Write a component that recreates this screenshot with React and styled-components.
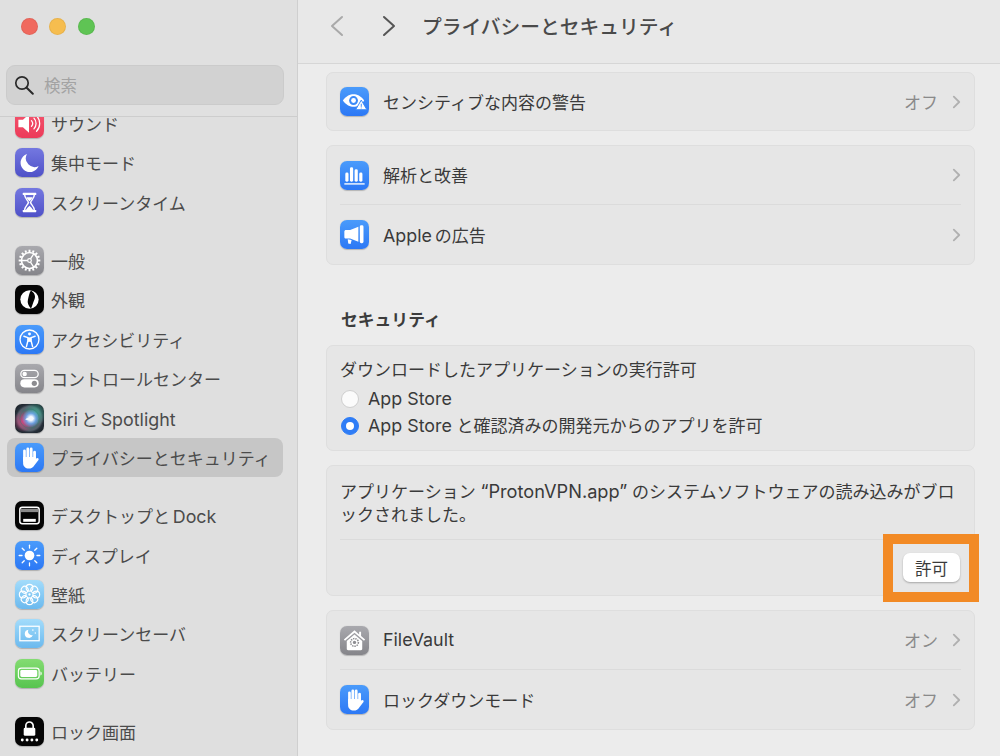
import React from 'react'
import styled, { createGlobalStyle } from 'styled-components'

const GlobalStyle = createGlobalStyle`
  html, body {
    margin: 0;
    padding: 0;
    background: #ececec;
    font-family: Inter, "Noto Sans CJK JP", sans-serif;
    -webkit-font-smoothing: antialiased;
  }
`

const tones = {
  blue: 'linear-gradient(180deg, #4a9bfb, #2c78f5)',
  gray: 'linear-gradient(180deg, #a9a9ae, #85858a)',
  black: '#050505',
  indigo: 'linear-gradient(180deg, #7478e0, #4f51c8)',
  red: 'linear-gradient(180deg, #f4566f, #ec3b59)',
  sky: 'linear-gradient(180deg, #a3dcfb, #6bb9ee)',
  green: 'linear-gradient(180deg, #84dc72, #57c44f)',
  siri: `radial-gradient(circle at 55% 50%, #f4f8ff 0 9%, rgba(110, 165, 235, 0.9) 24%, transparent 42%),
    radial-gradient(circle at 30% 60%, #d5447f 0, transparent 40%),
    radial-gradient(circle at 70% 32%, #3fa58f 0, transparent 42%),
    radial-gradient(circle at 50% 50%, #56616c 0 58%, #27303a 68%, #141a1e 100%)`,
}

const Window = styled.div`
  display: flex;
  width: 1000px;
  height: 756px;
  overflow: hidden;
  background: #ececec;
`

const Sidebar = styled.aside`
  display: flex;
  flex-direction: column;
  flex: none;
  width: 297px;
  height: 100%;
  background: #dfdfdf;
  border-right: 1px solid #cfcfcf;
`

const SidebarTop = styled.div`
  flex: none;
  height: 117px;
  padding: 18px 13px 0 6px;
  box-sizing: border-box;
  border-bottom: 1px solid #cdcdcd;
  background: #e0e0e0;
`

const Lights = styled.div`
  display: flex;
  gap: 11.4px;
  padding-left: 15px;
  margin-bottom: 30px;
`

const Light = styled.span`
  width: 17px;
  height: 17px;
  border-radius: 50%;
  background: ${(p) => p.$color};
  box-shadow: inset 0 0 0 1px rgba(0, 0, 0, 0.06);
`

const Search = styled.div`
  display: flex;
  align-items: center;
  gap: 10px;
  height: 40px;
  padding-left: 7px;
  box-sizing: border-box;
  border-radius: 9px;
  background: #d2d2d2;
  border: 1px solid #cbcbcb;
  color: #a3a3a3;
  font-size: 16.5px;
`

const ListClip = styled.div`
  flex: 1;
  min-height: 0;
  overflow: hidden;
`

const List = styled.div`
  display: flex;
  flex-direction: column;
  margin-top: -13.4px;
  padding: 0 14px 0 7px;
`

const Group = styled.div`
  display: flex;
  flex-direction: column;
  margin-bottom: 18.7px;
`

const SideRow = styled.div`
  display: flex;
  align-items: center;
  gap: 7px;
  height: 39.45px;
  padding-left: 8px;
  border-radius: 8px;
  font-size: 17px;
  color: #4b4b4b;
  white-space: nowrap;
  background: ${(p) => (p.$active ? '#c6c6c6' : 'transparent')};
`

const Tile = styled.span`
  display: flex;
  align-items: center;
  justify-content: center;
  flex: none;
  width: 29px;
  height: 29px;
  border-radius: 7px;
  background: ${(p) => tones[p.$tone]};
  box-shadow: 0 0.5px 1px rgba(0, 0, 0, 0.22);
  svg {
    display: block;
    width: 100%;
    height: 100%;
  }
`

const Latin = styled.span`
  font-size: ${(p) => p.$scale || 1.05}em;
`

const Mixed = styled.span`
  word-spacing: -2px;
`

const Main = styled.main`
  display: flex;
  flex-direction: column;
  flex: 1;
  min-width: 0;
`

const Header = styled.header`
  display: flex;
  align-items: center;
  flex: none;
  height: 64px;
  padding-left: 32px;
  padding-bottom: 11px;
  box-sizing: border-box;
  background: #e8e8e8;
  border-bottom: 1px solid #d6d6d6;
`

const NavButton = styled.span`
  display: flex;
  width: 14px;
  margin-right: 38px;
  &:last-of-type {
    margin-right: 26px;
  }
`

const Title = styled.h1`
  margin: 0 0 1px;
  font-size: 19.75px;
  font-weight: 500;
  color: #4a4a4a;
  white-space: nowrap;
`

const Content = styled.div`
  display: flex;
  flex-direction: column;
  gap: 14px;
  padding: 8px 25px 0 28px;
`

const Card = styled.section`
  border: 1px solid #dedede;
  border-radius: 7px;
  background: #e6e6e6;
  padding: 0 13px;
`

const RowItem = styled.div`
  display: flex;
  align-items: center;
  box-sizing: border-box;
  height: ${(p) => p.$h}px;
  & + & {
    border-top: 1px solid #dbdbdb;
  }
`

const RowLabel = styled.span`
  flex: 1;
  margin: 0 0 1px 14px;
  font-size: 17px;
  color: #3a3a3a;
  white-space: nowrap;
`

const RowValue = styled.span`
  font-size: 17px;
  color: #8a8a8a;
  margin: 0 14px 1px 0;
`

const SectionTitle = styled.h2`
  margin: 30px 0 0 15px;
  height: 22px;
  line-height: 22px;
  font-size: 16.8px;
  font-weight: 600;
  color: #3c3c3c;
`

const PermitCard = styled(Card)`
  padding: 12px 14px 11px 13px;
  font-size: 17px;
  color: #3a3a3a;
`

const PermitTitle = styled.div`
  height: 24px;
  line-height: 24px;
  margin-bottom: 3px;
`

const RadioRow = styled.div`
  display: flex;
  align-items: center;
  gap: 9px;
  height: 27px;
  line-height: 27px;
  padding-left: 1px;
  white-space: nowrap;
`

const RadioText = styled.span`
  display: block;
`

const Radio = styled.span`
  position: relative;
  flex: none;
  width: 18px;
  height: 18px;
  box-sizing: border-box;
  border-radius: 50%;
  background: ${(p) => (p.$on ? '#2f7df6' : '#fbfbfb')};
  border: 1px solid ${(p) => (p.$on ? '#2f7df6' : '#cfcfcf')};
  &::after {
    content: '';
    display: ${(p) => (p.$on ? 'block' : 'none')};
    position: absolute;
    inset: 4px;
    border-radius: 50%;
    background: #fff;
  }
`

const BlockedCard = styled(Card)`
  padding: 14px 14px 0 13px;
  font-size: 17px;
  color: #3a3a3a;
`

const BlockedText = styled.p`
  margin: 0;
  line-height: 23px;
  padding-bottom: 12px;
  border-bottom: 1px solid #dbdbdb;
  white-space: nowrap;
`

const BlockedFoot = styled.div`
  display: flex;
  justify-content: flex-end;
  height: 55px;
  padding-top: 13px;
  box-sizing: border-box;
`

const Highlight = styled.div`
  position: relative;
  width: 57px;
  height: 29px;
`

const AllowButton = styled.button`
  width: 100%;
  height: 100%;
  padding: 0;
  border: 0;
  border-radius: 7px;
  background: #fff;
  box-shadow: 0 1px 2px rgba(0, 0, 0, 0.28);
  font: inherit;
  font-size: 16.5px;
  color: #3a3a3a;
`

const HighlightFrame = styled.span`
  position: absolute;
  left: -20px;
  top: -19px;
  width: 96px;
  height: 68px;
  box-sizing: border-box;
  border: 10px solid #f28a25;
  pointer-events: none;
`

const W = '#fff'

const SearchGlyph = () => (
  <svg width="20" height="20" viewBox="0 0 20 20" fill="none" stroke="#2a2a2a" strokeWidth="1.7" strokeLinecap="round">
    <circle cx="8" cy="8" r="6.200" />
    <path d="M12.700 12.700 18.800 18.800" strokeWidth="2" />
  </svg>
)

const Chevron = () => (
  <svg width="9" height="14" viewBox="0 0 10 15" fill="none" stroke="#b0b0b0" strokeWidth="2" strokeLinecap="round" strokeLinejoin="round">
    <path d="M2 1.500 8 7.500 2 13.500" />
  </svg>
)

const NavChevron = ({ dir, color }) => (
  <svg width="14" height="22" viewBox="0 0 14 22" fill="none" stroke={color} strokeWidth="2" strokeLinecap="round" strokeLinejoin="round">
    <path d={dir === 'right' ? 'M2 2 12 11 2 20' : 'M12 2 2 11 12 20'} />
  </svg>
)

const Drawing = ({ children }) => <svg viewBox="0 0 30 30">{children}</svg>

const SoundIcon = () => (
  <Drawing>
    <path d="M3.500 11h4.700L14.500 5.500v19l-6.300-5.500H3.500z" fill={W} />
    <g fill="none" stroke={W} strokeWidth="1.300" strokeLinecap="round">
      <path d="M17 12a4.500 4.500 0 0 1 0 6" />
      <path d="M19.600 9.500a8 8 0 0 1 0 11" />
      <path d="M22.300 7a11.500 11.500 0 0 1 0 16" />
    </g>
  </Drawing>
)

const MoonIcon = () => (
  <Drawing>
    <path d="M12.400 6.200a9.600 9.600 0 1 0 12 12.400 9 9 0 0 1-12-12.400z" fill={W} />
  </Drawing>
)

const HourglassIcon = () => (
  <Drawing>
    <g fill={W}>
      <rect x="8" y="5" width="14" height="2.300" rx="0.600" />
      <rect x="8" y="22.700" width="14" height="2.300" rx="0.600" />
    </g>
    <path d="M10 7c0 4 3.400 5.600 3.900 8-.5 2.400-3.900 4-3.900 8M20 7c0 4-3.400 5.600-3.900 8 .5 2.400 3.900 4 3.900 8" fill="none" stroke={W} strokeWidth="1.500" />
    <path d="M11.800 9.500h6.400c-.6 1.800-2.200 3-3.200 4.300-1-1.300-2.600-2.500-3.200-4.300zM11.300 22.800c.5-1.700 2.500-3.200 3.700-4.500 1.200 1.300 3.200 2.800 3.700 4.500z" fill={W} />
  </Drawing>
)

const GearIcon = () => {
  const teeth = Array.from({ length: 16 }, (_, i) => i * 22.5)
  return (
    <Drawing>
      <g stroke={W} fill="none">
        <circle cx="15" cy="15" r="8.300" strokeWidth="1.700" />
        {teeth.map((a) => (
          <path key={a} d="M15 3.800v2.400" strokeWidth="2" transform={`rotate(${a} 15 15)`} />
        ))}
        <circle cx="15" cy="15" r="1.900" strokeWidth="1.300" />
        <path d="M13.100 15H7M16 13.400l3.900-6.100M16 16.600l3.900 6.100" strokeWidth="1.300" />
      </g>
    </Drawing>
  )
}

const AppearanceIcon = () => (
  <Drawing>
    <circle cx="15" cy="15" r="9.500" fill={W} />
    <path d="M16.500 5.600c3.800 2.500 5.100 6 3.600 9.400s-2.400 7-3.600 9.400c-2.500-2.500-4.100-6-3.100-9.400s1.100-7 3.100-9.400z" fill="#050505" />
  </Drawing>
)

const AccessIcon = () => (
  <Drawing>
    <circle cx="15" cy="15" r="9.800" fill="none" stroke={W} strokeWidth="1.400" />
    <circle cx="15" cy="9.300" r="1.500" fill={W} />
    <path d="M9.200 11.600 13.300 13v3.500l-1.500 5.800M20.800 11.600 16.700 13v3.500l1.500 5.800" fill="none" stroke={W} strokeWidth="1.500" strokeLinecap="round" strokeLinejoin="round" />
    <rect x="13.400" y="12.800" width="3.200" height="4.600" fill={W} />
  </Drawing>
)

const ControlIcon = () => (
  <Drawing>
    <rect x="6" y="6.500" width="18" height="7.500" rx="3.750" fill="none" stroke={W} strokeWidth="1.300" />
    <circle cx="10" cy="10.250" r="2.300" fill={W} />
    <rect x="5.500" y="15.700" width="19" height="8.500" rx="4.250" fill={W} />
    <circle cx="20" cy="19.950" r="2.700" fill="#8c8c90" />
  </Drawing>
)

const SiriIcon = () => (
  <Drawing>
    <circle cx="15" cy="15" r="10" fill="none" stroke="#2f7f74" strokeWidth="0.800" opacity="0.6" />
    <path d="M10.500 15.800c2.500-1.800 5-2.500 9.500-1.300-3 2.400-6.500 3-9.500 1.300z" fill="#f3f8ff" />
  </Drawing>
)

const HandIcon = () => (
  <Drawing>
    <g fill={W} transform="matrix(-1 0 0 1 30 0)">
      <rect x="8.300" y="8" width="2.900" height="12" rx="1.450" />
      <rect x="11.800" y="4.700" width="2.900" height="14" rx="1.450" />
      <rect x="15.300" y="4.700" width="2.900" height="14" rx="1.450" />
      <rect x="18.800" y="6.700" width="2.800" height="13" rx="1.400" />
      <path d="M8.300 14.500h13.300v6.800c0 3-2.600 5.200-5.700 5.200-2.800 0-4.600-1.200-6-3.600L5.700 17.500c-.8-1.500 1.200-2.800 2.400-1.400l2 2.300z" />
    </g>
  </Drawing>
)

const DesktopIcon = () => (
  <Drawing>
    <rect x="5" y="6.500" width="20" height="17" rx="2.500" fill="none" stroke={W} strokeWidth="1.500" />
    <rect x="6" y="8" width="18" height="3.500" fill="#8a8a8a" />
    <rect x="8.500" y="18.500" width="13" height="3" fill={W} />
  </Drawing>
)

const SunIcon = () => {
  const rays = Array.from({ length: 8 }, (_, i) => i * 45)
  return (
    <Drawing>
      <circle cx="15" cy="15" r="5" fill={W} />
      {rays.map((a) => (
        <path key={a} d="M15 4.300v3" stroke={W} strokeWidth="1.300" strokeLinecap="round" transform={`rotate(${a} 15 15)`} />
      ))}
    </Drawing>
  )
}

const FlowerIcon = () => {
  const petals = Array.from({ length: 8 }, (_, i) => i * 45)
  return (
    <Drawing>
      <g fill="none" stroke={W} strokeWidth="1.200">
        {petals.map((a) => (
          <circle key={a} cx="15" cy="8" r="3.500" transform={`rotate(${a} 15 15)`} />
        ))}
      </g>
      <circle cx="15" cy="15" r="1.200" fill={W} />
    </Drawing>
  )
}

const SaverIcon = () => (
  <Drawing>
    <rect x="5" y="7.500" width="20" height="15" fill="none" stroke={W} strokeWidth="1.300" />
    <path d="M13.800 11a4.300 4.300 0 1 0 4.700 5.600 4 4 0 0 1-4.700-5.600z" fill={W} />
    <circle cx="18.500" cy="11.500" r="0.800" fill={W} />
    <circle cx="21" cy="14.500" r="0.700" fill={W} />
  </Drawing>
)

const BatteryIcon = () => (
  <Drawing>
    <rect x="3.500" y="9.500" width="21.500" height="11" rx="3" fill="none" stroke={W} strokeWidth="1.200" />
    <rect x="5.500" y="11.500" width="17.500" height="7" rx="1.500" fill={W} />
    <path d="M26.300 13v4c.9-.3 1.300-1 1.300-2s-.4-1.700-1.300-2z" fill={W} />
  </Drawing>
)

const LockIcon = () => (
  <Drawing>
    <path d="M11.200 11.500V9a3.800 3.800 0 0 1 7.600 0v2.500" fill="none" stroke={W} strokeWidth="1.700" />
    <rect x="9" y="11" width="12" height="8.500" rx="1.500" fill={W} />
    {[7.500, 12.500, 17.500, 22.500].map((x) => (
      <circle key={x} cx={x} cy="23.800" r="1.500" fill={W} />
    ))}
  </Drawing>
)

const EyeAlertIcon = () => (
  <Drawing>
    <path d="M3 14c3.500-5 7.500-6.500 11-6.500s7.500 1.500 11 6.500c-3.500 5-7.500 6.500-11 6.500S6.500 19 3 14z" fill={W} />
    <circle cx="14" cy="14" r="4.600" fill="#3a8af8" />
    <circle cx="14" cy="14" r="2.500" fill={W} />
    <path d="M22 13.500 27.800 23.500H16.200z" fill={W} stroke="#3a8af8" strokeWidth="1" strokeLinejoin="round" />
    <path d="M22 17.300v3.200M22 21.300v.8" stroke="#3a8af8" strokeWidth="1" />
  </Drawing>
)

const BarsIcon = () => (
  <Drawing>
    <g fill={W}>
      <rect x="5.500" y="12" width="3.300" height="9.500" rx="1.500" />
      <rect x="10.300" y="6.500" width="3.300" height="15" rx="1.500" />
      <rect x="15.100" y="8.500" width="3.300" height="13" rx="1.500" />
      <rect x="19.900" y="12" width="3.300" height="9.500" rx="1.500" />
      <rect x="4.500" y="23" width="21" height="1.400" />
    </g>
  </Drawing>
)

const MegaphoneIcon = () => (
  <Drawing>
    <path d="M4.500 12c0-1 .7-1.700 1.700-1.700h4.300L19 7v15.500l-8.500-3.300H6.200c-1 0-1.700-.7-1.700-1.700z" fill={W} />
    <rect x="20.500" y="5.500" width="3.800" height="18.500" rx="1.500" fill={W} />
    <path d="M8 20l4 .8-1 4-2.500-.5z" fill={W} />
  </Drawing>
)

const VaultIcon = () => (
  <Drawing>
    <path d="M15 4.500 4 14l1.200 1.300L15 7l9.800 8.300L26 14l-4.200-3.600V6h-2v2.700z" fill={W} />
    <path d="M7 15.500 15 8.800l8 6.700v8c0 1-.5 1.500-1.500 1.500h-13C7.500 25 7 24.500 7 23.500z" fill={W} />
    <circle cx="15" cy="17" r="4" fill="none" stroke="#8d8d91" strokeWidth="1.600" strokeDasharray="1.500 0.900" />
    <circle cx="15" cy="17" r="1.700" fill="#8d8d91" />
  </Drawing>
)

const sideGroups = [
  [
    { label: 'サウンド', tone: 'red', icon: <SoundIcon /> },
    { label: '集中モード', tone: 'indigo', icon: <MoonIcon /> },
    { label: 'スクリーンタイム', tone: 'indigo', icon: <HourglassIcon /> },
  ],
  [
    { label: '一般', tone: 'gray', icon: <GearIcon /> },
    { label: '外観', tone: 'black', icon: <AppearanceIcon /> },
    { label: 'アクセシビリティ', tone: 'blue', icon: <AccessIcon /> },
    { label: 'コントロールセンター', tone: 'gray', icon: <ControlIcon /> },
    { label: <Mixed><Latin>Siri</Latin> と <Latin>Spotlight</Latin></Mixed>, tone: 'siri', icon: <SiriIcon /> },
    { label: 'プライバシーとセキュリティ', tone: 'blue', icon: <HandIcon />, active: true },
  ],
  [
    { label: <Mixed>デスクトップと <Latin>Dock</Latin></Mixed>, tone: 'black', icon: <DesktopIcon /> },
    { label: 'ディスプレイ', tone: 'blue', icon: <SunIcon /> },
    { label: '壁紙', tone: 'sky', icon: <FlowerIcon /> },
    { label: 'スクリーンセーバ', tone: 'sky', icon: <SaverIcon /> },
    { label: 'バッテリー', tone: 'green', icon: <BatteryIcon /> },
  ],
  [{ label: 'ロック画面', tone: 'black', icon: <LockIcon /> }],
]

const SettingRow = ({ tone = 'blue', icon, label, value, h }) => (
  <RowItem $h={h}>
    <Tile $tone={tone}>{icon}</Tile>
    <RowLabel>{label}</RowLabel>
    {value && <RowValue>{value}</RowValue>}
    <Chevron />
  </RowItem>
)

const App = () => {
  return (
    <Window>
      <GlobalStyle />
      <Sidebar>
        <SidebarTop>
          <Lights>
            <Light $color="#f0695e" />
            <Light $color="#f6bd4f" />
            <Light $color="#5fc454" />
          </Lights>
          <Search>
            <SearchGlyph />
            検索
          </Search>
        </SidebarTop>
        <ListClip>
          <List>
            {sideGroups.map((group, i) => (
              <Group key={i}>
                {group.map((item, j) => (
                  <SideRow key={j} $active={item.active}>
                    <Tile $tone={item.tone}>{item.icon}</Tile>
                    <span>{item.label}</span>
                  </SideRow>
                ))}
              </Group>
            ))}
          </List>
        </ListClip>
      </Sidebar>
      <Main>
        <Header>
          <NavButton>
            <NavChevron dir="left" color="#a9a9a9" />
          </NavButton>
          <NavButton>
            <NavChevron dir="right" color="#555" />
          </NavButton>
          <Title>プライバシーとセキュリティ</Title>
        </Header>
        <Content>
          <Card>
            <SettingRow icon={<EyeAlertIcon />} label="センシティブな内容の警告" value="オフ" h={57} />
          </Card>
          <Card>
            <SettingRow icon={<BarsIcon />} label="解析と改善" h={58} />
            <SettingRow icon={<MegaphoneIcon />} label={<Mixed><Latin>Apple</Latin> の広告</Mixed>} h={60} />
          </Card>
          <SectionTitle>セキュリティ</SectionTitle>
          <PermitCard>
            <PermitTitle>ダウンロードしたアプリケーションの実行許可</PermitTitle>
            <RadioRow>
              <Radio />
              <RadioText><Latin>App Store</Latin></RadioText>
            </RadioRow>
            <RadioRow>
              <Radio $on />
              <RadioText><Latin>App Store</Latin> と確認済みの開発元からのアプリを許可</RadioText>
            </RadioRow>
          </PermitCard>
          <BlockedCard>
            <BlockedText>
              アプリケーション <Latin $scale={1.07}>“ProtonVPN.app”</Latin> のシステムソフトウェアの読み込みがブロ
              <br />
              ックされました。
            </BlockedText>
            <BlockedFoot>
              <Highlight>
                <AllowButton>許可</AllowButton>
                <HighlightFrame />
              </Highlight>
            </BlockedFoot>
          </BlockedCard>
          <Card>
            <SettingRow tone="gray" icon={<VaultIcon />} label={<Latin>FileVault</Latin>} value="オン" h={58} />
            <SettingRow icon={<HandIcon />} label="ロックダウンモード" value="オフ" h={60} />
          </Card>
        </Content>
      </Main>
    </Window>
  )
}

export default App
